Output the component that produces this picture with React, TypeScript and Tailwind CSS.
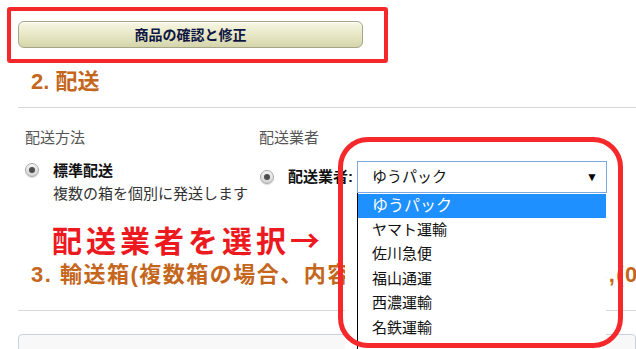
const carriers = ["ゆうパック", "ヤマト運輸", "佐川急便", "福山通運", "西濃運輸", "名鉄運輸"];

const Radio = () => (
  <span className="flex items-center justify-center w-[14px] h-[14px] shrink-0 rounded-full border border-[#a9a9a9] bg-gradient-to-b from-[#f4f4f4] to-[#d2d2d2] shadow-[0_1px_1px_rgba(0,0,0,0.15)]">
    <span className="w-[6px] h-[6px] rounded-full bg-[#4d4d4d]" />
  </span>
);

const App = () => {
  return (
    <div className="relative w-[636px] h-[349px] overflow-hidden bg-white font-['Liberation_Sans','Noto_Sans_CJK_JP',sans-serif] text-[#111]">
      {/* top button, boxed in red */}
      <div className="ml-[7px] mt-[7px] w-[381px] h-[56px] border-4 border-[#f5282c] rounded-[3px] pl-[7px] pt-[10px]">
        <button className="w-[345px] h-[27px] rounded-[6px] border border-[#a5a58a] bg-gradient-to-b from-[#f7f7e6] via-[#e8e8c6] to-[#d5d5ab] shadow-[inset_0_1px_0_rgba(255,255,255,0.9)] text-[14px] font-bold text-[#101644] leading-none">
          商品の確認と修正
        </button>
      </div>

      <h2 className="mt-[7px] pl-[31px] text-[22px] leading-[24px] font-bold text-[#c4661c]">2. 配送</h2>
      <div className="ml-[18px] mt-[13px] h-px bg-[#d9d9d9]" />

      <div className="grid grid-cols-[234px_1fr] pl-[25px] mt-[20px] text-[15px] leading-[20px] text-[#111]">
        <div className="text-[#555]">配送方法</div>
        <div className="text-[#555]">配送業者</div>

        <div className="flex items-start gap-[14px] mt-[13px]">
          <div className="mt-[2px]">
            <Radio />
          </div>
          <div>
            <div className="font-bold">標準配送</div>
            <div className="mt-[3px] text-[#333]">複数の箱を個別に発送します</div>
          </div>
        </div>

        <div className="flex items-center mt-[13px] h-[32px] pl-px">
          <Radio />
          <span className="ml-[14px] w-[69px] font-bold">配送業者:</span>
          <div className="relative z-10 w-[250px]">
            <div className="flex items-center justify-between h-[32px] border border-[#7ea6e0] bg-white pl-[14px] pr-[8px] text-[15px]">
              <span>ゆうパック</span>
              <span className="text-[12px] leading-none text-black">▼</span>
            </div>
            <ul className="absolute left-0 top-full w-[249px] h-[200px] pt-px bg-white border-l border-black text-[15px] shadow-[-12px_0_0_#fff]">
              {carriers.map((c, i) => (
                <li
                  key={c}
                  className={
                    i === 0
                      ? "h-[24px] leading-[24px] pl-[14px] bg-[#1e90ff] text-white text-[16px]"
                      : "h-[24.4px] leading-[24px] pl-[14px] text-[#111]"
                  }
                >
                  {c}
                </li>
              ))}
            </ul>
          </div>
        </div>
      </div>

      <div className="mt-[17px] pl-[52px] text-[30px] leading-[36px] tracking-[4px] font-bold text-[#ec1a1f] font-['Noto_Sans_CJK_JP',sans-serif]">
        配送業者を選択→
      </div>

      <h2 className="mt-[6px] pl-[31px] text-[22px] leading-[24px] tracking-[1.5px] font-bold text-[#c4661c] whitespace-nowrap">
        3. 輸送箱(複数箱の場合、内容と数量を入力して下さい,(0)
      </h2>
      <div className="ml-[18px] mt-[23px] h-px bg-[#d9d9d9]" />
      <div className="ml-[18px] mt-[23px] h-[40px] rounded-[4px] border border-[#c8d2dc] bg-[#f8f8f8]" />

      {/* red annotation around the open dropdown */}
      <div className="absolute left-[338px] top-[137px] w-[285px] h-[211px] rounded-[30px] border-[5px] border-[#f5282c] z-20 pointer-events-none" />
    </div>
  );
};

export default App;
